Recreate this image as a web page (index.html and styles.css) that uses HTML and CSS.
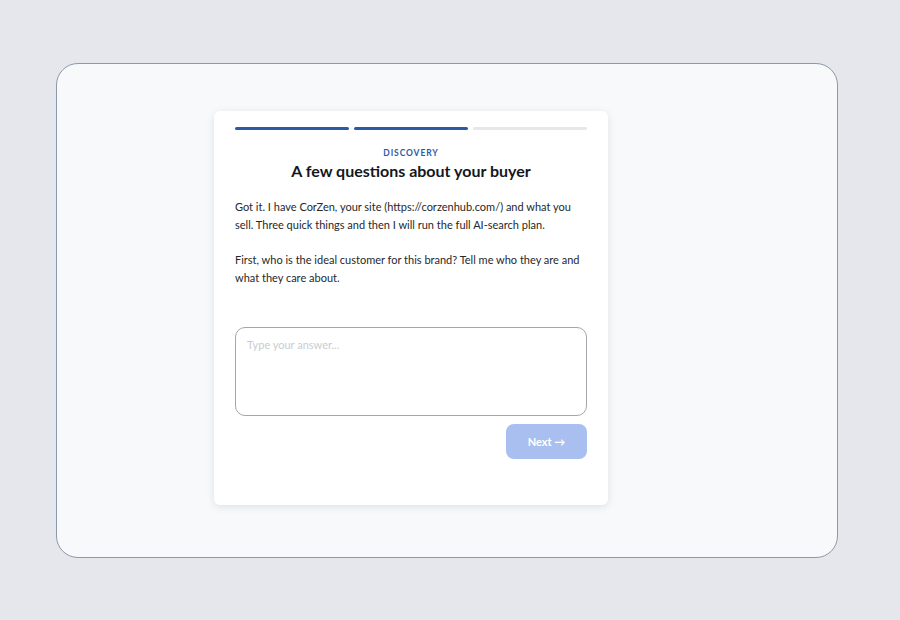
FILE: index.html
```html
<!DOCTYPE html>
<html lang="en">
<head>
    <meta charset="UTF-8">
    <meta name="viewport" content="width=device-width, initial-scale=1.0">
    <title>Discovery</title>
    <link rel="stylesheet" href="styles.css">
</head>
<body>

    <div class="frame">
        <div class="card">
            <div class="progress">
                <span class="step done"></span>
                <span class="step done"></span>
                <span class="step"></span>
            </div>

            <p class="eyebrow">DISCOVERY</p>
            <h2>A few questions about your buyer</h2>

            <div class="message">
                <p>Got it. I have CorZen, your site (https://corzenhub.com/) and what you sell. Three quick things and then I will run the full AI-search plan.</p>
                <p>First, who is the ideal customer for this brand? Tell me who they are and what they care about.</p>
            </div>

            <textarea class="answer" placeholder="Type your answer..."></textarea>

            <div class="actions">
                <button type="button" disabled>Next →</button>
            </div>
        </div>
    </div>

</body>
</html>
```

FILE: styles.css
```css
body {
    font-family: Lato, "Liberation Sans", sans-serif;
    margin: 0;
    background-color: #e5e7ec;
    height: 620px;
    padding: 63px 62px 62px 56px;
    box-sizing: border-box;
}
.frame {
    height: 100%;
    box-sizing: border-box;
    background-color: #f7f9fb;
    border: 1px solid #8c98ab;
    border-radius: 22px;
    padding-top: 47px;
    padding-left: 157px;
}
.card {
    width: 394px;
    height: 394px;
    box-sizing: border-box;
    padding: 16px 21px;
    background-color: #fff;
    border-radius: 6px;
    box-shadow: 0 2px 8px rgba(0, 0, 0, 0.1);
}
.progress {
    display: flex;
    gap: 5px;
}
.step {
    flex: 1;
    height: 3px;
    border-radius: 2px;
    background-color: #e6e7ea;
}
.step.done {
    background-color: #2c5ba6;
}
.eyebrow {
    margin: 18px 0 0;
    text-align: center;
    font-size: 8.5px;
    font-weight: 700;
    letter-spacing: 0.9px;
    color: #2c5ba6;
}
h2 {
    margin: 3px 0 0;
    text-align: center;
    font-size: 16px;
    font-weight: 700;
    color: #14171c;
}
.message {
    margin-top: 18px;
    font-size: 11px;
    line-height: 18px;
    color: #26282b;
}
.message p {
    margin: 0 0 17px;
}
.answer {
    display: block;
    width: 100%;
    height: 89px;
    box-sizing: border-box;
    margin-top: 40px;
    padding: 10px 11px;
    border: 1px solid #a3a6ab;
    border-radius: 10px;
    resize: none;
    font-family: inherit;
    font-size: 11px;
}
.answer::placeholder {
    color: #c9ccd1;
}
.actions {
    display: flex;
    justify-content: flex-end;
    margin-top: 8px;
}
button {
    width: 81px;
    height: 35px;
    border: none;
    border-radius: 8px;
    background-color: #a8bff0;
    color: #fff;
    font-family: inherit;
    font-size: 11px;
    font-weight: 700;
}
```
